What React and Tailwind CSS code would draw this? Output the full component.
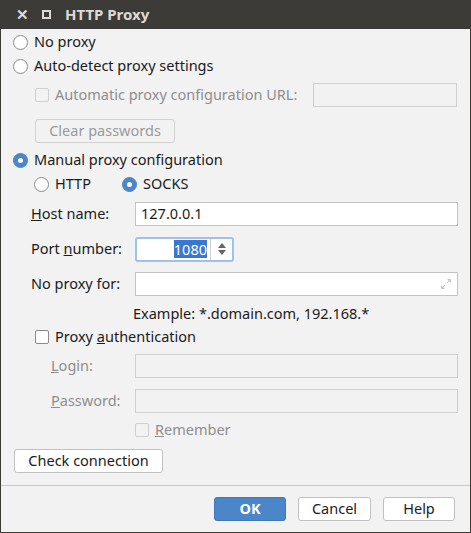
import React from 'react';

function Radio({ checked }) {
  return (
    <span
      className={`inline-flex h-[15px] w-[15px] shrink-0 items-center justify-center rounded-full border ${
        checked ? 'border-[#4a86c8] bg-[#4a86c8]' : 'border-[#8a8a8a] bg-white'
      }`}
    >
      {checked && <span className="h-[5px] w-[5px] rounded-full bg-white" />}
    </span>
  );
}

function Check({ disabled }) {
  return (
    <span
      className={`inline-block h-[14px] w-[14px] shrink-0 rounded-[2px] border ${
        disabled ? 'border-[#cfcfcf] bg-[#f2f2f2]' : 'border-[#8a8a8a] bg-white'
      }`}
    />
  );
}

function Field({ label, children, disabled }) {
  return (
    <div className="flex h-[24px] items-center">
      <span className={`w-[104px] ${disabled ? 'pl-[20px] text-[#8e8e8e]' : 'text-[#1b1b1b]'}`}>{label}</span>
      {children}
    </div>
  );
}

export default function App() {
  return (
    <div
      className="flex h-[533px] w-[471px] flex-col border-x border-b border-[#3c3b37] bg-[#f2f2f2] text-[14.5px] text-[#1b1b1b]"
      style={{ fontFamily: '"Noto Sans", "Open Sans", sans-serif' }}
    >
      {/* title bar */}
      <div className="flex h-[29px] shrink-0 items-center bg-[#3c3b37] text-[#dfdbd2]">
        <span className="ml-[15px] text-[15px] font-bold leading-none">✕</span>
        <span className="ml-[13px] inline-block h-[9px] w-[9px] border-2 border-[#dfdbd2]" />
        <span className="ml-[14px] text-[15px] font-bold">HTTP Proxy</span>
      </div>

      <div className="flex flex-1 flex-col px-[12px] pt-[1px]">
        <div className="flex h-[24px] items-center gap-[6px]">
          <Radio />
          <span>No proxy</span>
        </div>
        <div className="flex h-[24px] items-center gap-[6px]">
          <Radio />
          <span>Auto-detect proxy settings</span>
        </div>
        <div className="mt-[5px] flex h-[24px] items-center pl-[22px]">
          <Check disabled />
          <span className="ml-[6px] text-[#8e8e8e]">Automatic proxy configuration URL:</span>
          <span className="ml-auto mr-[1px] h-[24px] w-[144px] border border-[#cfcfcf] bg-[#f2f2f2]" />
        </div>
        <div className="mt-[12px] pl-[22px]">
          <div className="flex h-[24px] w-[140px] items-center justify-center rounded-[3px] border border-[#d2d2d2] text-[#9a9a9a]">
            Clear passwords
          </div>
        </div>
        <div className="mt-[5px] flex h-[24px] items-center gap-[6px]">
          <Radio checked />
          <span>Manual proxy configuration</span>
        </div>
        <div className="flex h-[24px] items-center pl-[21px]">
          <Radio />
          <span className="ml-[6px] w-[67px]">HTTP</span>
          <Radio checked />
          <span className="ml-[6px]">SOCKS</span>
        </div>

        <div className="mt-[6px] flex flex-col gap-[11px] pl-[18px]">
          <Field label={<><u>H</u>ost name:</>}>
            <div className="flex h-[24px] flex-1 items-center border border-[#c4c4c4] bg-white pl-[5px]">127.0.0.1</div>
          </Field>
          <Field label={<>Port <u>n</u>umber:</>}>
            <div className="flex h-[25px] w-[99px] items-center rounded-[3px] border-2 border-[#9ec1e8] bg-white">
              <div className="flex flex-1 justify-end pr-[3px]">
                <span className="bg-[#3a77cf] leading-[18px] text-white">1080</span>
              </div>
              <div className="flex h-full w-[22px] items-center justify-center border-l border-[#d0d0d0]">
                <svg width="10" height="14" viewBox="0 0 10 14">
                  <path d="M1 6 L5 1 L9 6 Z" fill="#666" />
                  <path d="M1 8 L5 13 L9 8 Z" fill="#666" />
                </svg>
              </div>
            </div>
          </Field>
          <Field label="No proxy for:">
            <div className="relative h-[24px] flex-1 border border-[#c4c4c4] bg-white">
              <svg className="absolute right-[5px] top-[5px]" width="12" height="12" viewBox="0 0 12 12">
                <path d="M7 1 H11 V5 Z M1 7 V11 H5 Z" fill="#c8c8c8" />
                <path d="M10 2 L7 5 M2 10 L5 7" stroke="#c8c8c8" strokeWidth="1" />
              </svg>
            </div>
          </Field>
        </div>

        <div className="mt-[5px] pl-[120px] leading-[24px]">Example: *.domain.com, 192.168.*</div>

        <div className="flex h-[24px] items-center pl-[22px]">
          <Check />
          <span className="ml-[6px]">Proxy <u>a</u>uthentication</span>
        </div>

        <div className="mt-[5px] flex flex-col gap-[11px] pl-[18px]">
          <Field disabled label={<><u>L</u>ogin:</>}>
            <div className="h-[24px] flex-1 border border-[#cfcfcf] bg-[#f2f2f2]" />
          </Field>
          <Field disabled label={<><u>P</u>assword:</>}>
            <div className="h-[24px] flex-1 border border-[#cfcfcf] bg-[#f2f2f2]" />
          </Field>
        </div>
        <div className="mt-[5px] flex h-[24px] items-center pl-[122px]">
          <Check disabled />
          <span className="ml-[6px] text-[#8e8e8e]"><u>R</u>emember</span>
        </div>

        <div className="mt-[7px] pl-[1px]">
          <div className="inline-flex h-[24px] w-[149px] items-center justify-center rounded-[3px] border border-[#c0c0c0] bg-white">
            Check connection
          </div>
        </div>
      </div>

      {/* footer */}
      <div className="flex h-[47px] shrink-0 items-center justify-end gap-[12px] border-t border-[#c8c8c8] pr-[15px]">
        <div className="flex h-[24px] w-[72px] items-center justify-center rounded-[3px] border border-[#3f78b8] bg-[#4a86c8] font-bold text-white">
          OK
        </div>
        <div className="flex h-[24px] w-[73px] items-center justify-center rounded-[3px] border border-[#c0c0c0] bg-white">
          Cancel
        </div>
        <div className="flex h-[24px] w-[72px] items-center justify-center rounded-[3px] border border-[#c0c0c0] bg-white">
          Help
        </div>
      </div>
    </div>
  );
}
